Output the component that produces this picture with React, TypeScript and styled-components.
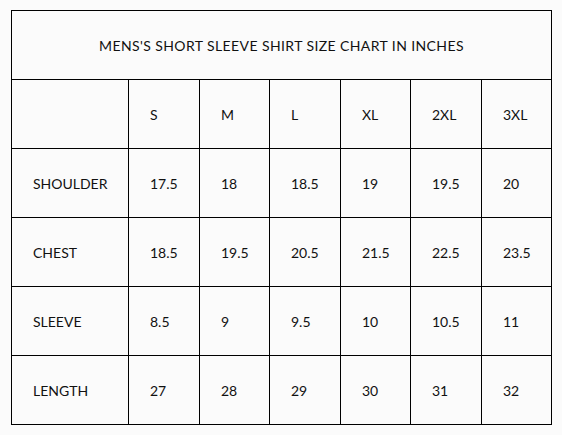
import styled, { createGlobalStyle } from "styled-components";

const GlobalStyle = createGlobalStyle`
  html, body {
    margin: 0;
    padding: 0;
    background: #fbfbfb;
  }
  body {
    padding: 10px 0 0 11px;
    font-family: Lato, "Liberation Sans", sans-serif;
    color: #111;
  }
`;

const ChartTable = styled.table`
  border-collapse: collapse;
  table-layout: fixed;
  width: 541px;
  font-size: 14px;
  border: 1px solid #000;
`;

const Col = styled.col<{ $w: number }>`
  width: ${(p) => p.$w}px;
`;

const Cell = styled.td`
  border: 1px solid #000;
  padding: 0 0 0 21px;
  text-align: left;
  height: 68px;
  white-space: nowrap;
`;

const TitleCell = styled.th`
  border: 1px solid #000;
  font-weight: 400;
  text-align: center;
  padding: 0;
  height: 68px;
  letter-spacing: 0.4px;
`;

const colWidths = [117, 71, 70, 71, 70, 71, 70];
const sizes = ["S", "M", "L", "XL", "2XL", "3XL"];

interface IRow {
  label: string;
  values: string[];
}

const rows: IRow[] = [
  { label: "SHOULDER", values: ["17.5", "18", "18.5", "19", "19.5", "20"] },
  { label: "CHEST", values: ["18.5", "19.5", "20.5", "21.5", "22.5", "23.5"] },
  { label: "SLEEVE", values: ["8.5", "9", "9.5", "10", "10.5", "11"] },
  { label: "LENGTH", values: ["27", "28", "29", "30", "31", "32"] },
];

function App() {
  return (
    <>
      <GlobalStyle />
      <ChartTable>
        <colgroup>
          {colWidths.map((w, i) => (
            <Col key={i} $w={w} />
          ))}
        </colgroup>
        <thead>
          <tr>
            <TitleCell colSpan={7}>MENS'S SHORT SLEEVE SHIRT SIZE CHART IN INCHES</TitleCell>
          </tr>
        </thead>
        <tbody>
          <tr>
            <Cell />
            {sizes.map((s) => (
              <Cell key={s}>{s}</Cell>
            ))}
          </tr>
          {rows.map((r) => (
            <tr key={r.label}>
              <Cell>{r.label}</Cell>
              {r.values.map((v, i) => (
                <Cell key={i}>{v}</Cell>
              ))}
            </tr>
          ))}
        </tbody>
      </ChartTable>
    </>
  );
}

export default App;
